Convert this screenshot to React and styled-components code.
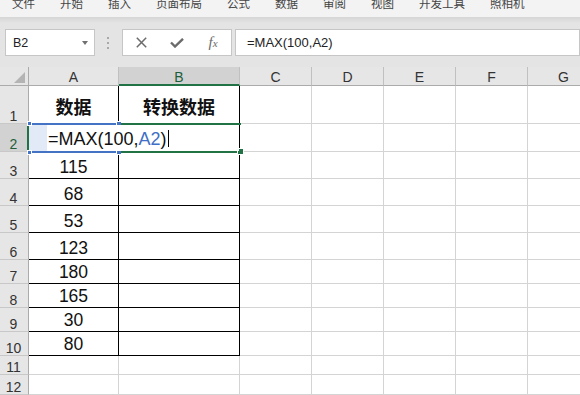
import styled, { createGlobalStyle } from "styled-components";

const GlobalStyle = createGlobalStyle`
  html, body { margin: 0; padding: 0; background: #fff; }
  body { font-family: "Liberation Sans", "Noto Sans CJK SC", sans-serif; }
`;

const Window = styled.div`
  width: 580px;
  height: 395px;
  overflow: hidden;
  background: #e4e4e4;
`;

// ribbon tabs, cut off at the top of the shot
const MenuBar = styled.div`
  height: 17px;
  display: flex;
  gap: 25px;
  padding-left: 12px;
  background: #f3f3f3;
  overflow: hidden;
  white-space: nowrap;
`;

const MenuItem = styled.span`
  font-family: "Noto Sans CJK SC", sans-serif;
  font-size: 11.5px;
  line-height: 12px;
  margin-top: -3px;
  color: #444;
`;

const Toolbar = styled.div`
  height: 50px;
  box-sizing: border-box;
  padding: 12px 0 0 5px;
  display: flex;
  align-items: flex-start;
  background: linear-gradient(to bottom, #d6d6d6 0, #e4e4e4 6px, #e4e4e4 100%);
`;

const Box = styled.div`
  box-sizing: border-box;
  height: 27px;
  background: #fff;
  border: 1px solid #c6c6c6;
  display: flex;
  align-items: center;
`;

const NameBox = styled(Box)`
  width: 101px;
  padding: 0 6px 0 7px;
  justify-content: space-between;
  font-size: 12.5px;
  color: #222;
`;

const Caret = styled.span`
  width: 0;
  height: 0;
  border-left: 3.5px solid transparent;
  border-right: 3.5px solid transparent;
  border-top: 4px solid #707070;
`;

const Grip = styled.div`
  width: 31px;
  height: 27px;
  display: flex;
  flex-direction: column;
  align-items: center;
  justify-content: center;
  gap: 3px;
  > i {
    width: 2px;
    height: 2px;
    background: #a8a8a8;
  }
`;

const FxBox = styled(Box)`
  width: 110px;
  margin-right: 3px;
  > span {
    width: 36px;
    display: flex;
    justify-content: center;
    align-items: center;
  }
`;

const Fx = styled.span`
  font-family: "Liberation Serif", serif;
  font-style: italic;
  color: #6b6b6b;
  font-size: 15px;
  > small {
    font-size: 11px;
  }
`;

const FormulaInput = styled(Box)`
  width: 345px;
  flex-shrink: 0;
  padding-left: 11px;
  font-size: 13px;
  color: #222;
`;

const Sheet = styled.div`
  position: relative;
  display: grid;
  grid-template-columns: 29px 90px 121px 72px 72px 72px 72px 72px;
  grid-template-rows: ${(p) => p.$rows};
  background: #fff;
`;

const Corner = styled.div`
  box-sizing: border-box;
  background: #e6e6e6;
  border-right: 1px solid #ababab;
  border-bottom: 1px solid #ababab;
  display: flex;
  justify-content: flex-end;
  align-items: flex-end;
  padding: 0 3px 2px 0;
  &::after {
    content: "";
    width: 11px;
    height: 11px;
    background: #b4b4b4;
    clip-path: polygon(100% 0, 100% 100%, 0 100%);
  }
`;

const ColHead = styled.div`
  box-sizing: border-box;
  background: ${(p) => (p.$active ? "#d2d2d2" : "#e6e6e6")};
  border-right: 1px solid #c0c0c0;
  border-bottom: ${(p) => (p.$active ? "2px solid #217346" : "1px solid #ababab")};
  display: flex;
  justify-content: center;
  align-items: flex-end;
  padding-bottom: ${(p) => (p.$active ? 0 : 1)}px;
  font-size: 14px;
  line-height: 14px;
  color: ${(p) => (p.$active ? "#1e5e3a" : "#333")};
`;

const RowHead = styled.div`
  box-sizing: border-box;
  background: ${(p) => (p.$active ? "#d2d2d2" : "#e6e6e6")};
  border-right: ${(p) => (p.$active ? "2px solid #217346" : "1px solid #ababab")};
  border-bottom: 1px solid #c8c8c8;
  display: flex;
  justify-content: center;
  align-items: flex-end;
  padding-right: ${(p) => (p.$active ? 0 : 1)}px;
  font-size: 14px;
  line-height: 14px;
  color: ${(p) => (p.$active ? "#1e5e3a" : "#333")};
`;

const Cell = styled.div`
  box-sizing: border-box;
  border-right: 1px solid ${(p) => (p.$ruled ? "#000" : "#d4d4d4")};
  border-bottom: 1px solid ${(p) => (p.$ruled ? "#000" : "#d4d4d4")};
  display: flex;
  justify-content: center;
  align-items: flex-end;
  padding-bottom: ${(p) => p.$pb}px;
  font-size: ${(p) => (p.$bold ? 18 : 17.5)}px;
  font-weight: ${(p) => (p.$bold ? 700 : 400)};
  line-height: 21px;
  color: #111;
  overflow: hidden;
  white-space: nowrap;
`;

// selection + reference outlines sit over the grid
const RefBox = styled.div`
  position: absolute;
  left: 29px;
  top: 56px;
  width: 90px;
  height: 30px;
  box-sizing: border-box;
  border-top: 2px solid #4472c4;
  border-bottom: 2px solid #4472c4;
  background: #e3eaf7;
`;

const Handle = styled.i`
  position: absolute;
  width: ${(p) => p.$size}px;
  height: ${(p) => p.$size}px;
  background: ${(p) => p.$color};
  ${(p) => (p.$top ? "top: -3px;" : "bottom: -3px;")}
  ${(p) => (p.$left ? "left: -1px;" : "right: -2px;")}
  outline: 1px solid #fff;
`;

const ActiveBox = styled.div`
  position: absolute;
  left: 121px;
  top: 56px;
  width: 120px;
  height: 30px;
  box-sizing: border-box;
  border-top: 2px solid #217346;
  border-bottom: 2px solid #217346;
`;

const Editor = styled.div`
  position: absolute;
  left: 47px;
  top: 58px;
  width: 192px;
  height: 26px;
  box-sizing: border-box;
  background: #fff;
  padding: 4px 0 0 1px;
  font-size: 18px;
  line-height: 20px;
  color: #111;
  white-space: nowrap;
  display: flex;
  align-items: flex-start;
`;

const Ref = styled.span`
  color: #3f6fc6;
`;

const Cursor = styled.span`
  display: inline-block;
  width: 1px;
  height: 17px;
  margin-top: 1px;
  margin-left: 1px;
  background: #000;
`;

const columns = ["A", "B", "C", "D", "E", "F", "G"];

const rows = [
  { h: 38, a: "数据", b: "转换数据", bold: true, pb: 4 },
  { h: 28, a: "", b: "" },
  { h: 27, a: "115" },
  { h: 27, a: "68" },
  { h: 27, a: "53" },
  { h: 27, a: "123" },
  { h: 24, a: "180" },
  { h: 24, a: "165" },
  { h: 24, a: "30" },
  { h: 24, a: "80" },
  { h: 19, blank: true },
  { h: 20, blank: true },
  { h: 20, blank: true },
];

const menus = ["文件", "开始", "插入", "页面布局", "公式", "数据", "审阅", "视图", "开发工具", "照相机"];

export default function App() {
  const template = ["19px", ...rows.map((r) => `${r.h}px`)].join(" ");

  return (
    <>
      <GlobalStyle />
      <Window>
        <MenuBar>
          {menus.map((m) => (
            <MenuItem key={m}>{m}</MenuItem>
          ))}
        </MenuBar>

        <Toolbar>
          <NameBox>
            <span>B2</span>
            <Caret />
          </NameBox>
          <Grip>
            <i />
            <i />
            <i />
          </Grip>
          <FxBox>
            <span>
              <svg width="11" height="11" viewBox="0 0 11 11">
                <path d="M0.8 0.8 L10.2 10.2 M10.2 0.8 L0.8 10.2" stroke="#6b6b6b" strokeWidth="1.5" fill="none" />
              </svg>
            </span>
            <span>
              <svg width="14" height="10" viewBox="0 0 14 10">
                <path d="M1 4.5 L5 8.5 L13 0.8" stroke="#6b6b6b" strokeWidth="2.4" fill="none" />
              </svg>
            </span>
            <span>
              <Fx>
                f<small>x</small>
              </Fx>
            </span>
          </FxBox>
          <FormulaInput>=MAX(100,A2)</FormulaInput>
        </Toolbar>

        <Sheet $rows={template}>
          <Corner />
          {columns.map((c) => (
            <ColHead key={c} $active={c === "B"}>
              {c}
            </ColHead>
          ))}

          {rows.map((r, i) => (
            <RowCells key={i} n={i + 1} row={r} />
          ))}

          <RefBox>
            <Handle $size={3} $color="#4472c4" $top $left />
            <Handle $size={4} $color="#4472c4" $top />
            <Handle $size={3} $color="#4472c4" $left />
            <Handle $size={4} $color="#4472c4" />
          </RefBox>
          <ActiveBox>
            <Handle $size={5} $color="#217346" />
          </ActiveBox>
          <Editor>
            =MAX(100,<Ref>A2</Ref>)
            <Cursor />
          </Editor>
        </Sheet>
      </Window>
    </>
  );
}

function RowCells({ n, row }) {
  const pb = row.pb ?? 0;
  return (
    <>
      <RowHead $active={n === 2}>{n}</RowHead>
      <Cell $ruled={!row.blank} $bold={row.bold} $pb={pb}>
        {row.a}
      </Cell>
      <Cell $ruled={!row.blank} $bold={row.bold} $pb={pb}>
        {row.b}
      </Cell>
      {columns.slice(2).map((c) => (
        <Cell key={c} $pb={pb} />
      ))}
    </>
  );
}
